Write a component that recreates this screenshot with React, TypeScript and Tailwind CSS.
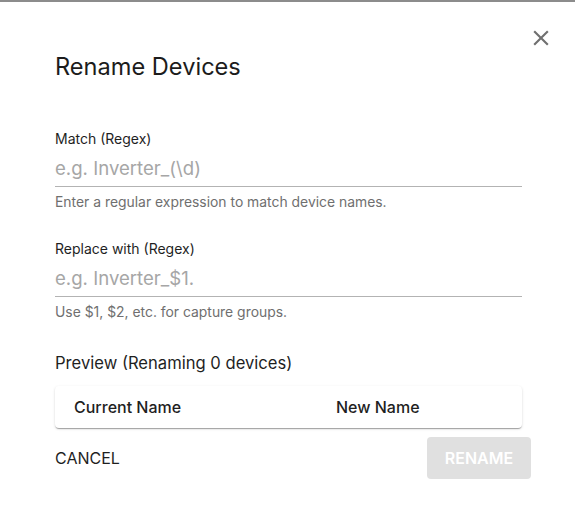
import React from "react";

export default function App() {
  return (
    <div className="w-[575px] h-[505px] bg-white font-['Inter','Liberation_Sans',sans-serif] text-[#1f1f1f] overflow-hidden">
      <div className="h-[2px] bg-[#8c8c8c]" />
      <div className="mt-[23px] flex justify-end pr-[21px]">
        <svg width="26" height="26" viewBox="0 0 24 24" className="text-[#707070]" fill="currentColor">
          <path d="M19 6.41 17.59 5 12 10.59 6.41 5 5 6.41 10.59 12 5 17.59 6.41 19 12 13.41 17.59 19 19 17.59 13.41 12z" />
        </svg>
      </div>
      <div className="pl-[55px] pr-[53px]">
        <div className="mt-[2px] text-[23.6px] leading-[28px] text-[#1c1c1c]">Rename Devices</div>

        <div className="mt-[48px] text-[14px] leading-[20px] text-[#1f1f1f]">Match (Regex)</div>
        <div className="mt-[5px] border-b border-[#b3b3b3] pb-[4px]">
          <div className="text-[18.6px] leading-[28px] text-[#a6a6a6]">e.g. Inverter_(\d)</div>
        </div>
        <div className="mt-[5px] text-[13.9px] leading-[20px] text-[#6f6f6f]">
          Enter a regular expression to match device names.
        </div>

        <div className="mt-[27px] text-[14px] leading-[20px] text-[#1f1f1f]">Replace with (Regex)</div>
        <div className="mt-[5px] border-b border-[#b3b3b3] pb-[4px]">
          <div className="text-[18.6px] leading-[28px] text-[#a6a6a6]">e.g. Inverter_$1.</div>
        </div>
        <div className="mt-[5px] text-[13.9px] leading-[20px] text-[#6f6f6f]">
          Use $1, $2, etc. for capture groups.
        </div>

        <div className="mt-[29px] text-[16.6px] leading-[24px] text-[#1f1f1f]">Preview (Renaming 0 devices)</div>
        <div className="mt-[11px] h-[42px] rounded-[4px] bg-white shadow-[0_2px_1px_-1px_rgba(0,0,0,0.2),0_1px_1px_0_rgba(0,0,0,0.14),0_1px_3px_0_rgba(0,0,0,0.12)] flex items-center text-[16px] font-medium text-[#1f1f1f]">
          <div className="w-[281px] pl-[19px]">Current Name</div>
          <div>New Name</div>
        </div>
      </div>
      <div className="mt-[9px] pl-[55px] pr-[53px] flex items-center justify-between">
        <div className="text-[16px] leading-[24px] text-[#1f1f1f]">CANCEL</div>
        <div className="-mr-[9px] w-[104px] h-[42px] rounded-[4px] bg-[#e0e0e0] flex items-center justify-center text-[16px] font-semibold text-white">
          RENAME
        </div>
      </div>
    </div>
  );
}
